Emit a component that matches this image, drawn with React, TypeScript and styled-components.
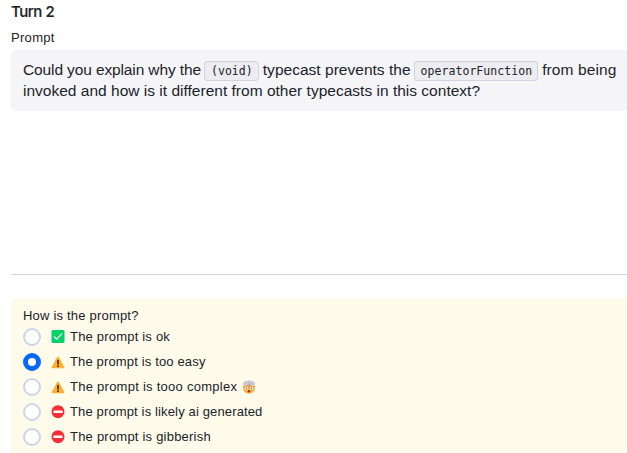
import React, { useState } from "react";
import styled, { createGlobalStyle } from "styled-components";

const GlobalStyle = createGlobalStyle`
  * { box-sizing: border-box; }
  body {
    margin: 0;
    background: #fff;
    color: #20232b;
    font-family: "Liberation Sans", Arial, sans-serif;
    overflow: hidden;
  }
`;

const Page = styled.main`
  display: flex;
  flex-direction: column;
  height: 453px;
  padding-left: 11px;
  overflow: hidden;
`;

const Title = styled.h1`
  margin: 2px 0 0;
  font: 500 15px/20px Inter, sans-serif;
  letter-spacing: -0.45px;
  -webkit-text-stroke: 0.2px currentColor;
`;

const Label = styled.div`
  margin-top: 6px;
  height: 22px;
  font-size: 13px;
  line-height: 20px;
  letter-spacing: 0.3px;
`;

const PromptBox = styled.section`
  flex: none;
  height: 61px;
  padding: 9px 0 0 12px;
  border-radius: 6px 0 0 6px;
  background: #f5f5f8;
`;

const Line = styled.div`
  display: flex;
  align-items: center;
  height: 21px;
  white-space: nowrap;
  font-size: 15.5px;
  line-height: 21px;
`;

const Run = styled.span<{ $spacing: number }>`
  letter-spacing: ${(p) => p.$spacing}px;
`;

const Code = styled.code`
  display: block;
  height: 20px;
  margin: 3px 4px 0 3px;
  padding: 0 5px 0 6px;
  border: 1px solid #d3d3df;
  border-radius: 3px;
  background: #ececf1;
  font: 11.5px/19px "DejaVu Sans Mono", monospace;
  letter-spacing: 0.05px;
`;

const Divider = styled.hr`
  flex: none;
  width: 100%;
  height: 1px;
  margin: 163px 0 23px;
  border: 0;
  background: #d0d9e8;
`;

const Survey = styled.section`
  flex: 1;
  padding: 8px 0 0 12px;
  border-radius: 6px 0 0 0;
  background: #fffbea;
  font-size: 13px;
`;

const Question = styled.div`
  height: 18px;
  line-height: 19px;
  letter-spacing: 0.2px;
`;

const Option = styled.label`
  display: flex;
  align-items: center;
  height: 25px;
  white-space: nowrap;
`;

const Radio = styled.input`
  appearance: none;
  flex: none;
  width: 18px;
  height: 18px;
  margin: 0 10px 0 0;
  border: 2px solid #cbd5e7;
  border-radius: 50%;
  background: #fff;
  &:checked { border: 5px solid #0568fd; }
`;

const OptionText = styled.span<{ $spacing: number }>`
  margin-left: 5px;
  letter-spacing: ${(p) => p.$spacing}px;
`;

const Icon = styled.svg`
  flex: none;
  display: block;
  width: 14px;
  height: 14px;
`;

const ExplodingIcon = styled(Icon)`
  margin-left: 5px;
`;

const Check = () => (
  <Icon viewBox="0 0 14 14">
    <rect x=".5" y="0" width="13" height="13" rx="1.5" fill="#00d26a" />
    <path d="m3.4 6.8 2.4 2.3 4.9-5.2" fill="none" stroke="#f4f4f4" strokeWidth="1.3" strokeLinecap="round" strokeLinejoin="round" />
  </Icon>
);

const Warning = () => (
  <Icon viewBox="0 0 14 14">
    <path d="M6.1 2.2Q7 .8 7.9 2.2L13.3 12Q13.7 13.3 12.5 13.3h-11Q.3 13.3.7 12Z" fill="#ffb02e" />
    <path d="M7 5.4v3.5" stroke="#2e211c" strokeWidth="1.5" strokeLinecap="round" />
    <circle cx="7" cy="11.2" r=".9" fill="#2e211c" />
  </Icon>
);

const NoEntry = () => (
  <Icon viewBox="0 0 14 14">
    <circle cx="7" cy="6.7" r="6.5" fill="#f92f37" />
    <rect x="2.4" y="5.5" width="9.2" height="2.5" rx=".5" fill="#fff" />
  </Icon>
);

const Exploding = () => (
  <ExplodingIcon viewBox="0 0 14 14">
    <path d="M1 6.2 4.5 5l5.2.1L13 6.2c.2 4.6-2.1 7.3-6 7.3S.8 10.8 1 6.2Z" fill="#ffae2c" />
    <path d="m1 6.2 1.5-.8.8.8L5 5.3l2 1 2-1 1.8.9.8-.8 1.4.8-1.5 1h-9Z" fill="#f49245" />
    <path d="M3 5.6C.3 5.2 0 3.3 1.8 2.5 2.3.8 4 .8 5 .9 6-.1 8.2-.1 9 .9c1.5-.2 2.9.4 3.2 1.6 1.8.8 1.5 2.7-1.2 3.1L9 4.7H5Z" fill="#cacbd0" />
    <path d="M5.8 3.5h2.4l.5 2H5.3Z" fill="#adabb2" />
    <circle cx="4.4" cy="8.2" r="1.6" fill="#fff" />
    <circle cx="9.6" cy="8.2" r="1.6" fill="#fff" />
    <circle cx="4.6" cy="8.2" r=".65" fill="#402a32" />
    <circle cx="9.4" cy="8.2" r=".65" fill="#402a32" />
    <ellipse cx="7" cy="11.2" rx="1.2" ry="1.2" fill="#bb1d56" />
  </ExplodingIcon>
);

const options = [
  { text: "The prompt is ok", icon: Check, spacing: 0.2 },
  { text: "The prompt is too easy", icon: Warning, spacing: 0.15 },
  { text: "The prompt is tooo complex", icon: Warning, spacing: 0.26, exploding: true },
  { text: "The prompt is likely ai generated", icon: NoEntry, spacing: 0.14 },
  { text: "The prompt is gibberish", icon: NoEntry, spacing: 0.22 },
];

export default function App() {
  const [selected, setSelected] = useState(1);
  return (
    <>
      <GlobalStyle />
      <Page>
        <Title>Turn 2</Title>
        <Label>Prompt</Label>
        <PromptBox>
          <Line>
            <Run $spacing={-0.12}>Could you explain why the</Run>
            <Code>(void)</Code>
            <Run $spacing={0.02}>typecast prevents the</Run>
            <Code>operatorFunction</Code>
            <Run $spacing={0.1}>from being</Run>
          </Line>
          <Line>
            <Run $spacing={0.01}>invoked and how is it different from other typecasts in this context?</Run>
          </Line>
        </PromptBox>
        <Divider />
        <Survey>
          <Question>How is the prompt?</Question>
          {options.map(({ text, icon: OptionIcon, spacing, exploding }, i) => (
            <Option key={text}>
              <Radio type="radio" name="rating" checked={selected === i} onChange={() => setSelected(i)} />
              <OptionIcon />
              <OptionText $spacing={spacing}>{text}</OptionText>
              {exploding && <Exploding />}
            </Option>
          ))}
        </Survey>
      </Page>
    </>
  );
}
